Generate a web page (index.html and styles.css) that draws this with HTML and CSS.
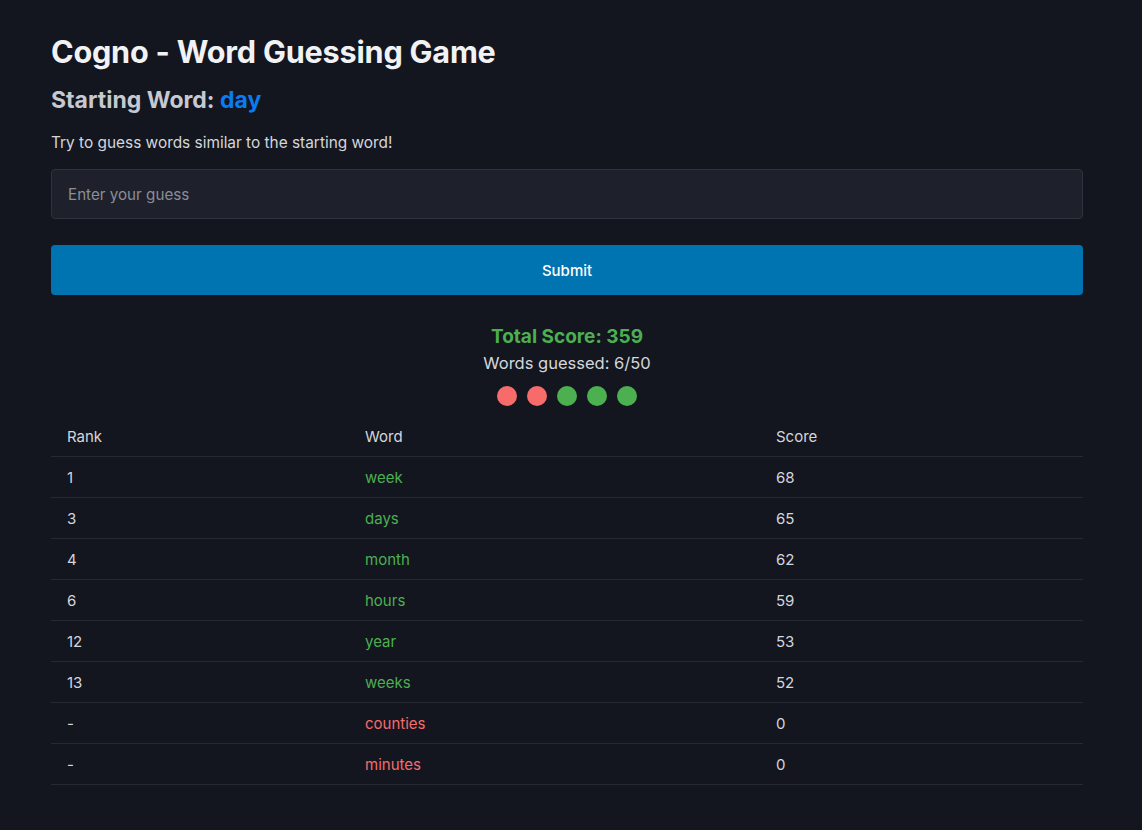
FILE: index.html
```html
<!DOCTYPE html>
<html lang="en">
<head>
<meta charset="utf-8">
<title>Cogno - Word Guessing Game</title>
<link rel="stylesheet" href="styles.css">
</head>
<body>
<div class="container">
  <h1 class="title">Cogno - Word Guessing Game</h1>
  <h2 class="start">Starting Word: <span class="start-word">day</span></h2>
  <p class="hint">Try to guess words similar to the starting word!</p>
  <input class="guess" type="text" placeholder="Enter your guess">
  <button class="submit">Submit</button>
  <div class="stats">
    <div class="total">Total Score: 359</div>
    <div class="count">Words guessed: 6/50</div>
    <div class="dots">
      <span class="dot dot-bad"></span>
      <span class="dot dot-bad"></span>
      <span class="dot dot-good"></span>
      <span class="dot dot-good"></span>
      <span class="dot dot-good"></span>
    </div>
  </div>
  <table class="results">
    <thead>
      <tr><th class="c-rank">Rank</th><th class="c-word">Word</th><th class="c-score">Score</th></tr>
    </thead>
    <tbody>
      <tr><td>1</td><td class="good">week</td><td>68</td></tr>
      <tr><td>3</td><td class="good">days</td><td>65</td></tr>
      <tr><td>4</td><td class="good">month</td><td>62</td></tr>
      <tr><td>6</td><td class="good">hours</td><td>59</td></tr>
      <tr><td>12</td><td class="good">year</td><td>53</td></tr>
      <tr><td>13</td><td class="good">weeks</td><td>52</td></tr>
      <tr><td>-</td><td class="bad">counties</td><td>0</td></tr>
      <tr><td>-</td><td class="bad">minutes</td><td>0</td></tr>
    </tbody>
  </table>
</div>
</body>
</html>
```

FILE: styles.css
```css
html, body {
  margin: 0;
  padding: 0;
  background: #13161f;
}
body {
  font-family: Inter, "Noto Sans", sans-serif;
  color: #d4d6dc;
}
.container {
  width: 1032px;
  padding: 29px 0 40px 51px;
}
.title {
  margin: 0;
  font-size: 30.6px;
  line-height: 46px;
  font-weight: 700;
  color: #f1f2f4;
  letter-spacing: -0.2px;
}
.start {
  margin: 8px 0 0;
  font-size: 23px;
  line-height: 34px;
  font-weight: 700;
  color: #c6c9d1;
}
.start-word {
  color: #0a7cf2;
}
.hint {
  margin: 15px 0 0;
  font-size: 15.4px;
  line-height: 22px;
  color: #d4d6dc;
}
.guess {
  display: block;
  box-sizing: border-box;
  width: 100%;
  height: 50px;
  margin-top: 15px;
  padding: 0 16px;
  background: #1e212b;
  border: 1px solid #2f323c;
  border-radius: 4px;
  font-family: inherit;
  font-size: 15.2px;
  color: #d4d6dc;
  outline: none;
}
.guess::placeholder {
  color: #8a8e98;
}
.submit {
  display: block;
  width: 100%;
  height: 50px;
  margin-top: 26px;
  background: #0073b1;
  border: none;
  border-radius: 4px;
  color: #ffffff;
  font-family: inherit;
  font-size: 15px;
  font-weight: 500;
}
.stats {
  display: flex;
  flex-direction: column;
  align-items: center;
  margin-top: 29px;
}
.total {
  font-size: 19px;
  line-height: 26px;
  font-weight: 700;
  color: #4caf50;
}
.count {
  font-size: 16.5px;
  line-height: 26px;
  color: #d4d6dc;
}
.dots {
  display: flex;
  gap: 10px;
  margin-top: 10px;
}
.dot {
  width: 20px;
  height: 20px;
  border-radius: 50%;
}
.dot-bad { background: #f76b6b; }
.dot-good { background: #4caf50; }
.results {
  width: 100%;
  margin-top: 10px;
  border-collapse: collapse;
  font-size: 15px;
}
.results th, .results td {
  height: 40px;
  padding: 0 16px;
  text-align: left;
  font-weight: 400;
  color: #d4d6dc;
  border-bottom: 1px solid #262934;
}
.c-rank { width: 266px; }
.c-word { width: 379px; }
.results td.good { color: #4caf50; }
.results td.bad { color: #f76b6b; }
```
